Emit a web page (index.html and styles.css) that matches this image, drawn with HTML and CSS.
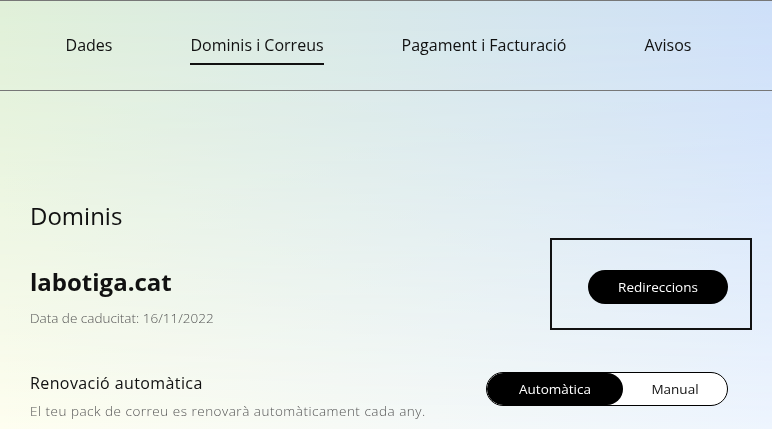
FILE: index.html
```html
<!DOCTYPE html>
<html>
<head>
    <title>Dominis i Correus</title>
    <link rel="stylesheet" href="styles.css">
</head>
<body>

    <nav class="tabs">
        <a href="#" class="tab">Dades</a>
        <a href="#" class="tab active">Dominis i Correus</a>
        <a href="#" class="tab">Pagament i Facturació</a>
        <a href="#" class="tab">Avisos</a>
    </nav>

    <main class="content">
        <h2 class="section-title">Dominis</h2>

        <div class="domain-row">
            <div class="domain-info">
                <h3 class="domain-name">labotiga.cat</h3>
                <p class="muted">Data de caducitat: 16/11/2022</p>
            </div>
            <div class="highlight">
                <button type="button" class="btn">Redireccions</button>
            </div>
        </div>

        <div class="renew-row">
            <div class="renew-info">
                <h4 class="renew-title">Renovació automàtica</h4>
                <p class="muted">El teu pack de correu es renovarà automàticament cada any.</p>
            </div>
            <div class="switch">
                <button type="button" class="switch-option selected">Automàtica</button>
                <button type="button" class="switch-option">Manual</button>
            </div>
        </div>
    </main>

</body>
</html>
```

FILE: styles.css
```css
html {
    min-height: 100%;
    background: linear-gradient(to right, #fefef0, #eef5fe);
}

body {
    margin: 0;
    min-height: 429px;
    font-family: "Open Sans", Arial, sans-serif;
    color: #111;
    border-top: 1px solid #777;
}

/* green to blue wash that fades out towards the bottom */
body::before {
    content: "";
    position: fixed;
    top: 0;
    left: 0;
    right: 0;
    bottom: 0;
    z-index: -1;
    background: linear-gradient(to right, #e0f0d8, #cddff9);
    -webkit-mask-image: linear-gradient(to bottom, #000 0%, rgba(0, 0, 0, 0.75) 30%, transparent 100%);
    mask-image: linear-gradient(to bottom, #000 0%, rgba(0, 0, 0, 0.75) 30%, transparent 100%);
}

.tabs {
    display: flex;
    justify-content: center;
    gap: 78px;
    padding: 32px 15px 25px 0;
    border-bottom: 1px solid #777;
}

.tab {
    font-size: 16px;
    line-height: 24px;
    color: #111;
    text-decoration: none;
    padding-bottom: 6px;
    border-bottom: 2px solid transparent;
}

.tab.active {
    border-bottom-color: #111;
}

.content {
    padding: 109px 44px 0 30px;
}

.section-title {
    margin: 0;
    font-size: 24px;
    line-height: 32px;
    font-weight: 400;
}

.domain-row {
    display: flex;
    justify-content: space-between;
    align-items: flex-start;
    margin-top: 6px;
}

.domain-info {
    margin-top: 28px;
}

.domain-name {
    margin: 0;
    font-size: 24px;
    line-height: 32px;
    font-weight: 700;
}

.muted {
    margin: 11px 0 0;
    font-size: 13.5px;
    line-height: 18px;
    font-weight: 300;
    color: #555;
}

.highlight {
    border: 2px solid #111;
    padding: 30px 22px 24px 36px;
    margin-right: -24px;
}

.btn {
    display: block;
    width: 140px;
    height: 34px;
    border: none;
    border-radius: 17px;
    background-color: #000;
    color: #fff;
    font-family: inherit;
    font-size: 13.5px;
    cursor: pointer;
}

.renew-row {
    display: flex;
    justify-content: space-between;
    align-items: flex-start;
    margin-top: 41px;
}

.renew-title {
    margin: 0;
    font-size: 16px;
    line-height: 24px;
    font-weight: 400;
    letter-spacing: 0.4px;
}

.renew-info .muted {
    margin-top: 7px;
    letter-spacing: 0.5px;
}

.switch {
    display: flex;
    width: 240px;
    height: 32px;
    margin-top: 1px;
    border: 1px solid #000;
    border-radius: 17px;
    background-color: #fff;
    overflow: hidden;
}

.switch-option {
    flex: 1;
    border: none;
    border-radius: 17px;
    background: transparent;
    color: #111;
    font-family: inherit;
    font-size: 13.5px;
    cursor: pointer;
}

.switch-option.selected {
    flex: 0 0 136px;
    background-color: #000;
    color: #fff;
}
```
